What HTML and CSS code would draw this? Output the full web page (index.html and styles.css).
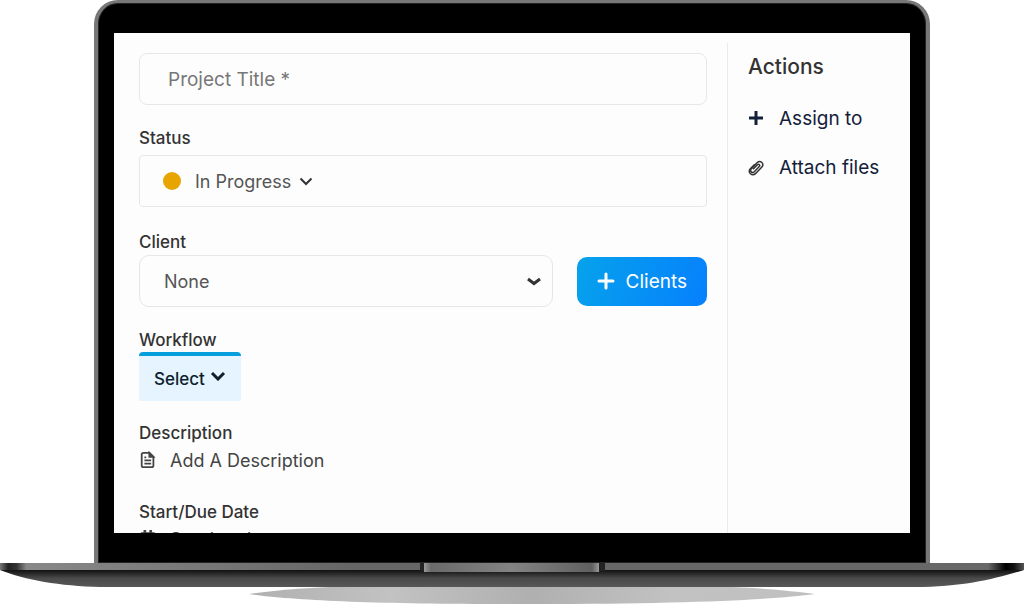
FILE: index.html
```
<!DOCTYPE html>
<html lang="en">
<head>
  <meta charset="UTF-8">
  <meta name="viewport" content="width=device-width, initial-scale=1.0">
  <title>New Project</title>
  <link rel="stylesheet" href="styles.css">
</head>
<body>
  <div class="laptop">
    <div class="lid">
      <div class="screen">
        <!-- Project form -->
        <form class="project-form">
          <input class="title-input" type="text" placeholder="Project Title *" aria-label="Project Title">

          <div class="field status-field">
            <label for="status">Status</label>
            <button class="status-button" id="status" type="button">
              <span class="status-dot"></span>
              <span>In Progress</span>
              <svg class="chevron" viewBox="0 0 14 9"><path d="M1.500 1.500 7 7l5.500-5.500"/></svg>
            </button>
          </div>

          <div class="field client-field">
            <label for="client">Client</label>
            <div class="client-row">
              <div class="select-wrap">
                <select id="client">
                  <option>None</option>
                </select>
                <svg class="select-arrow" viewBox="0 0 14 9"><path d="M1 2l6 4.500L13 2"/></svg>
              </div>
              <button class="clients-button" type="button">
                <svg class="plus" viewBox="0 0 18 18"><path d="M9 2v14M2 9h14"/></svg>
                <span>Clients</span>
              </button>
            </div>
          </div>

          <div class="field workflow-field">
            <label for="workflow">Workflow</label>
            <button class="workflow-button" id="workflow" type="button">
              <span>Select</span>
              <svg class="chevron-bold" viewBox="0 0 16 10"><path d="M2 2l6 6 6-6"/></svg>
            </button>
          </div>

          <div class="field description-field">
            <label for="description">Description</label>
            <button class="line-button" id="description" type="button">
              <svg class="line-icon" viewBox="0 0 18 20">
                <path d="M4 2h6.500L15 6.500V16a2 2 0 0 1-2 2H4a2 2 0 0 1-2-2V4a2 2 0 0 1 2-2z"/>
                <path d="M10.500 2v4.500H15z" fill="currentColor"/>
                <path d="M5 7h2M5 10.500h7.500M5 14h7.500"/>
              </svg>
              <span>Add A Description</span>
            </button>
          </div>

          <div class="field date-field">
            <label for="dates">Start/Due Date</label>
            <button class="line-button" id="dates" type="button">
              <svg class="line-icon" viewBox="0 0 18 20">
                <path d="M2 3.500h13.500v14H2zM2 8h13.500"/>
                <path class="thick" d="M5.500 0v5M12 0v5"/>
              </svg>
              <span>Set due date</span>
            </button>
          </div>
        </form>

        <!-- Actions -->
        <aside class="actions">
          <h2>Actions</h2>
          <button class="action" type="button">
            <svg class="action-icon" viewBox="0 0 16 16"><path class="thick" d="M8 0v14M1 7h14"/></svg>
            <span>Assign to</span>
          </button>
          <button class="action" type="button">
            <svg class="action-icon" viewBox="0 0 16 16">
              <path class="thin" d="M5 9.300l4.500-4.500c1.300-1.300 3.100.4 1.800 1.800l-5 5.200c-2 2-5-.8-3-3l6-6.200c3-3 7.600 1.200 4.600 4.300l-6.200 6.500C4.200 16.900-1 12.400 2.300 8.800l4.500-4.600"/>
            </svg>
            <span>Attach files</span>
          </button>
        </aside>
      </div>
    </div>

    <!-- Keyboard base and its shadow -->
    <svg class="base" viewBox="0 0 1024 41" preserveAspectRatio="none">
      <defs>
        <linearGradient id="deck" x1="0" x2="1" y1="0" y2="0">
          <stop offset="0" stop-color="#777"/>
          <stop offset=".008" stop-color="#222"/>
          <stop offset=".016" stop-color="#333"/>
          <stop offset=".026" stop-color="#888"/>
          <stop offset=".2" stop-color="#777"/>
          <stop offset=".34" stop-color="#666"/>
          <stop offset=".965" stop-color="#686868"/>
          <stop offset=".982" stop-color="#000"/>
          <stop offset=".99" stop-color="#111"/>
          <stop offset="1" stop-color="#555"/>
        </linearGradient>
        <linearGradient id="belly" x1="0" x2="0" y1="0" y2="1">
          <stop offset="0" stop-color="#111"/>
          <stop offset=".15" stop-color="#222"/>
          <stop offset=".5" stop-color="#4b4b4b"/>
          <stop offset="1" stop-color="#575757"/>
        </linearGradient>
        <linearGradient id="notch" x1="0" x2="1" y1="0" y2="0">
          <stop offset="0" stop-color="#999"/>
          <stop offset=".04" stop-color="#6a6a6a"/>
          <stop offset=".5" stop-color="#838383"/>
          <stop offset=".96" stop-color="#606060"/>
          <stop offset="1" stop-color="#999"/>
        </linearGradient>
        <linearGradient id="shade" x1="0" x2="1" y1="0" y2="0">
          <stop offset="0" stop-color="#b0b0b0"/>
          <stop offset=".25" stop-color="#c2c2c2"/>
          <stop offset=".5" stop-color="#b0b0b0"/>
          <stop offset=".75" stop-color="#c2c2c2"/>
          <stop offset="1" stop-color="#c0c0c0"/>
        </linearGradient>
      </defs>
      <path d="M249 31C290 25 340 23 400 22h270c60 1 110 4 145 9-45 6-130 10-283 10s-230-3-283-10z" fill="url(#shade)"/>
      <path d="M0 7h1024c-30 9-60 17-110 17H100C60 23 25 17 0 7z" fill="url(#belly)"/>
      <path d="M0 0h1024v7H0z" fill="url(#deck)"/>
      <path d="M420 0h185v8H420z" fill="#222"/>
      <path d="M424 0h175v9H424z" fill="url(#notch)"/>
    </svg>
  </div>
</body>
</html>
```
FILE: styles.css
```
* {
  box-sizing: border-box;
  margin: 0;
  padding: 0;
}

body {
  background: white;
  font-family: Inter, "Liberation Sans", sans-serif;
  font-size: 18px;
  color: #333;
}

button,
input,
select {
  font: inherit;
  color: inherit;
}

button {
  border: none;
  background: none;
  cursor: pointer;
}

svg {
  display: block;
  flex: none;
  fill: none;
  stroke: currentColor;
}

/* Laptop */
.laptop {
  display: flex;
  flex-direction: column;
  height: 100vh;
}

.lid {
  flex: 1;
  min-height: 0;
  margin: 0 94px;
  padding: 30px 16px;
  background: black;
  border: 4px solid #777;
  border-top-width: 3px;
  border-bottom: none;
  border-radius: 24px 24px 0 0;
  box-shadow: inset 0 0 0 1px #222;
}

.screen {
  display: flex;
  height: 100%;
  background: #fdfdfd;
  overflow: hidden;
}

.base {
  width: 100%;
  height: 41px;
  stroke: none;
}

/* Project form */
.project-form {
  flex: 1;
  padding: 20px 20px 0 25px;
}

.title-input {
  display: block;
  width: 100%;
  height: 52px;
  padding: 0 28px;
  border: 1px solid #e4e8ea;
  border-radius: 8px;
  background: #fdfdfd;
  font-size: 19px;
}

.title-input::placeholder {
  color: #777;
}

.field label {
  display: block;
  font-size: 17px;
  font-weight: 500;
  line-height: 20px;
}

.status-field {
  margin-top: 23px;
}

.status-button {
  display: flex;
  align-items: center;
  width: 100%;
  height: 52px;
  margin-top: 7px;
  padding: 0 23px;
  border: 1px solid #e4e8ea;
  border-radius: 4px;
  color: #555;
}

.status-dot {
  width: 18px;
  height: 18px;
  margin-right: 14px;
  border-radius: 50%;
  background: #e8a400;
}

.chevron {
  width: 14px;
  height: 9px;
  margin-left: 8px;
  color: #333;
  stroke-width: 2;
}

.client-field {
  margin-top: 25px;
}

.client-row {
  display: flex;
  align-items: center;
  gap: 24px;
  margin-top: 3px;
}

.select-wrap {
  position: relative;
  flex: 1;
}

.select-wrap select {
  display: block;
  width: 100%;
  height: 52px;
  padding: 0 24px;
  border: 1px solid #e6e6e6;
  border-radius: 10px;
  background: #fdfdfd;
  color: #555;
  appearance: none;
}

.select-arrow {
  position: absolute;
  top: 22px;
  right: 12px;
  width: 14px;
  height: 9px;
  stroke-width: 3;
  pointer-events: none;
}

.clients-button {
  display: flex;
  align-items: center;
  gap: 11px;
  height: 49px;
  padding: 0 20px;
  border-radius: 10px;
  background: linear-gradient(110deg, #06a2ec, #0680fd);
  color: white;
  font-size: 19px;
}

.plus {
  width: 18px;
  height: 18px;
  stroke-width: 3;
  stroke-linecap: round;
}

.workflow-field {
  margin-top: 23px;
}

.workflow-button {
  display: flex;
  align-items: center;
  gap: 5px;
  height: 49px;
  margin-top: 2px;
  padding: 0 15px;
  border-top: 4px solid #069fdd;
  border-radius: 4px 4px 2px 2px;
  background: #e5f4fe;
  color: #0d1f2d;
  font-size: 17px;
  font-weight: 500;
}

.chevron-bold {
  width: 16px;
  height: 10px;
  margin-bottom: 5px;
  stroke-width: 3;
}

.description-field {
  margin-top: 22px;
}

.line-button {
  display: flex;
  align-items: center;
  gap: 13px;
  height: 34px;
  color: #444;
}

.line-icon {
  width: 18px;
  height: 18px;
  stroke-width: 2;
}

.date-field {
  margin-top: 25px;
}

/* Actions */
.actions {
  width: 183px;
  margin-top: 10px;
  padding: 10px 0 0 20px;
  border-left: 1px solid #ebebeb;
}

.actions h2 {
  font-size: 21px;
  font-weight: 500;
  line-height: 28px;
  margin-bottom: 13px;
}

.action {
  display: flex;
  align-items: center;
  gap: 15px;
  height: 49px;
  color: #14203a;
  font-size: 19px;
}

.action-icon {
  width: 16px;
  height: 16px;
}

.thick {
  stroke-width: 3;
}

.thin {
  stroke: #333;
  stroke-width: 1.5;
}
```
